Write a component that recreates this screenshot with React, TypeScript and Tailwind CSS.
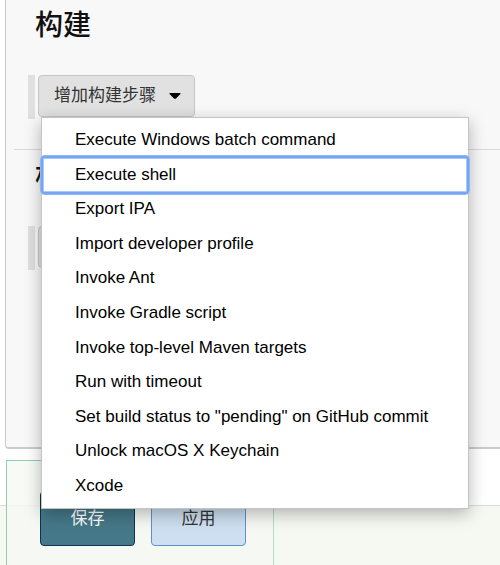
import React from "react";

const steps = [
  "Execute Windows batch command",
  "Execute shell",
  "Export IPA",
  "Import developer profile",
  "Invoke Ant",
  "Invoke Gradle script",
  "Invoke top-level Maven targets",
  "Run with timeout",
  'Set build status to "pending" on GitHub commit',
  "Unlock macOS X Keychain",
  "Xcode",
];

function StepMenu() {
  return (
    <div
      role="menu"
      className="absolute top-full left-[3px] z-10 flex h-[392px] w-[428px] flex-col border border-[#c4c4c4] bg-white px-px py-[5px] shadow-[0_5px_16px_rgba(0,0,0,0.28)]"
    >
      {steps.map((step) => (
        <button
          key={step}
          type="button"
          role="menuitem"
          className={
            "flex flex-1 items-center pl-8 text-left text-[17px] leading-5 whitespace-nowrap text-black outline-none " +
            (step === "Execute shell"
              ? "relative rounded-xs shadow-[inset_0_0_0_1px_#a9c8fb,0_0_0_2px_#76a5f5,0_0_0_3px_#8fb6f9]"
              : "")
          }
        >
          {step}
        </button>
      ))}
    </div>
  );
}

function StepButton({ label, open }: { label: string; open?: boolean }) {
  return (
    <div className="flex gap-[3px]">
      <div className="h-11 w-[7px] bg-[#e0e0e0]" />
      <div className="relative h-[42px]">
        <button
          type="button"
          aria-haspopup="menu"
          aria-expanded={!!open}
          className="flex h-full items-center gap-[13px] rounded border border-[#c6c6c6] bg-[#e1e1e1] pr-[13px] pl-[15px] text-[17px] leading-6 whitespace-nowrap text-[#333]"
        >
          {label}
          <svg width="12" height="6" viewBox="0 0 12 6" className="fill-black" aria-hidden="true">
            <path d="M1 0h10q1 .5 .2 1.3L7 5.4q-1 .9-2 0L.8 1.3Q0 .5 1 0Z" />
          </svg>
        </button>
        {open && <StepMenu />}
      </div>
    </div>
  );
}

export default function App() {
  return (
    <div className="flex h-screen flex-col overflow-hidden bg-white font-['Liberation_Sans','Noto_Sans_CJK_SC',sans-serif]">
      <main className="ml-[5px] rounded-bl border-b-2 border-l border-[#cbcbcb] bg-[#f8f8f8] pb-[147px] pl-2">
        <section className="pt-1.5 pb-[30px] pl-[14px]">
          <h2 className="mb-[29px] pl-[7px] text-[28px] leading-10 font-medium text-[#111]">构建</h2>
          <StepButton label="增加构建步骤" open />
        </section>
        <section className="border-t border-[#d9d9d9] pt-[7px] pb-[30px] pl-[14px]">
          <h2 className="mb-[29px] pl-[7px] text-[28px] leading-10 font-medium text-[#111]">构建后操作</h2>
          <StepButton label="增加构建后操作步骤" />
        </section>
      </main>
      <footer className="mt-[11px] grid flex-1">
        <div className="col-start-1 row-start-1 mt-[45px] border-t border-[#d9ddd8] bg-[#f6f9f2]" />
        <div className="col-start-1 row-start-1 ml-1.5 flex w-[268px] items-start gap-4 border-x border-t border-[#8fceb0] border-r-[#b5dcc5] bg-[#f6f9f2]/80 pt-[30px] pl-[33px] text-[17px] leading-6">
          <button
            type="button"
            className="h-[55px] w-[95px] rounded border border-[#0d3450] bg-[#457888] text-white"
          >
            保存
          </button>
          <button
            type="button"
            className="h-[55px] w-[95px] rounded border border-[#5b91d2] bg-[#cddff0] text-[#333]"
          >
            应用
          </button>
        </div>
      </footer>
    </div>
  );
}
